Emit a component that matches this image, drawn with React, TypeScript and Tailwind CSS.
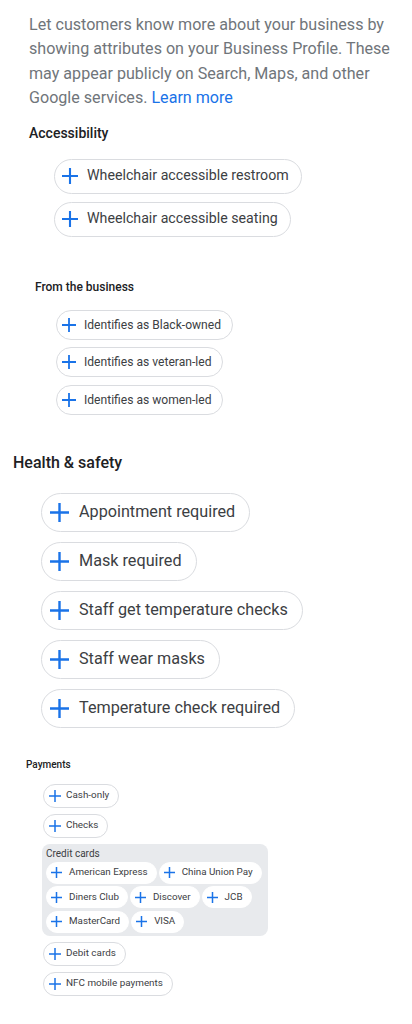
import React from 'react'

type Size = 'lg' | 'md' | 'sm' | 'xs' | 'inner'

const chipClass: Record<Size, string> = {
  lg: 'h-[39px] pl-[8px] pr-[14px] gap-[10px] text-[16.2px] border border-[#dadce0] bg-white',
  md: 'h-[35px] pl-[7px] pr-[12px] gap-[9px] text-[14.2px] border border-[#dadce0] bg-white',
  sm: 'h-[30px] pl-[5px] pr-[11px] gap-[8px] text-[12.1px] border border-[#dadce0] bg-white',
  xs: 'h-[24px] pl-[5px] pr-[9px] gap-[5px] text-[9.9px] border border-[#dadce0] bg-white',
  inner: 'h-[22px] pl-[4px] pr-[8px] gap-[7px] text-[9.8px] border border-white bg-white',
}

const iconSize: Record<Size, [number, number]> = {
  lg: [19, 2.4],
  md: [16, 2.1],
  sm: [14, 1.8],
  xs: [12, 1.5],
  inner: [11, 1.5],
}

function Plus({ size }: { size: Size }) {
  const [s, w] = iconSize[size]
  return (
    <svg width={s} height={s} viewBox={`0 0 ${s} ${s}`} className="shrink-0">
      <path d={`M${s / 2} 0V${s}M0 ${s / 2}H${s}`} stroke="#1a73e8" strokeWidth={w} fill="none" />
    </svg>
  )
}

function Chip({ label, size }: { label: string; size: Size }) {
  return (
    <div className={`flex items-center rounded-full text-[#3c4043] whitespace-nowrap ${chipClass[size]}`}>
      <Plus size={size} />
      <span>{label}</span>
    </div>
  )
}

export default function App() {
  return (
    <div className="min-h-screen bg-white font-['Roboto',sans-serif] flex flex-col items-start pb-6">
      <p className="pt-[13px] pl-[29px] w-[400px] pr-[4px] text-[16.1px] leading-[24.4px] text-[#70757a]">
        Let customers know more about your business by showing attributes on your Business Profile. These
        may appear publicly on Search, Maps, and other <span>Google services.</span>{' '}
        <a href="#" className="text-[#1a73e8]">Learn more</a>
      </p>

      <h2 className="mt-[12px] ml-[29px] text-[14px] leading-[20px] font-medium text-[#202124]">Accessibility</h2>
      <div className="mt-[16px] ml-[54px] flex flex-col items-start gap-[8px]">
        <Chip size="md" label="Wheelchair accessible restroom" />
        <Chip size="md" label="Wheelchair accessible seating" />
      </div>

      <h2 className="mt-[42px] ml-[35px] text-[12px] leading-[16px] font-medium text-[#202124]">From the business</h2>
      <div className="mt-[15px] ml-[56px] flex flex-col items-start gap-[7.5px]">
        <Chip size="sm" label="Identifies as Black-owned" />
        <Chip size="sm" label="Identifies as veteran-led" />
        <Chip size="sm" label="Identifies as women-led" />
      </div>

      <h2 className="mt-[37px] ml-[13px] text-[16px] leading-[22px] font-medium text-[#202124]">Health &amp; safety</h2>
      <div className="mt-[19px] ml-[41px] flex flex-col items-start gap-[10px]">
        <Chip size="lg" label="Appointment required" />
        <Chip size="lg" label="Mask required" />
        <Chip size="lg" label="Staff get temperature checks" />
        <Chip size="lg" label="Staff wear masks" />
        <Chip size="lg" label="Temperature check required" />
      </div>

      <h2 className="mt-[30px] ml-[26px] text-[10px] leading-[14px] font-medium text-[#202124]">Payments</h2>
      <div className="mt-[12px] ml-[43px] flex flex-col items-start gap-[6px]">
        <Chip size="xs" label="Cash-only" />
        <Chip size="xs" label="Checks" />
        <div className="-ml-px w-[226px] rounded-[8px] bg-[#e8eaed] pl-[4px] pr-[4px] pt-[2px] pb-[3px]">
          <div className="text-[10px] leading-[16px] text-[#3c4043]">Credit cards</div>
          <div className="flex flex-wrap gap-x-[2px] gap-y-[2.5px]">
            <Chip size="inner" label="American Express" />
            <Chip size="inner" label="China Union Pay" />
            <Chip size="inner" label="Diners Club" />
            <Chip size="inner" label="Discover" />
            <Chip size="inner" label="JCB" />
            <Chip size="inner" label="MasterCard" />
            <Chip size="inner" label="VISA" />
          </div>
        </div>
        <Chip size="xs" label="Debit cards" />
        <Chip size="xs" label="NFC mobile payments" />
      </div>
    </div>
  )
}
